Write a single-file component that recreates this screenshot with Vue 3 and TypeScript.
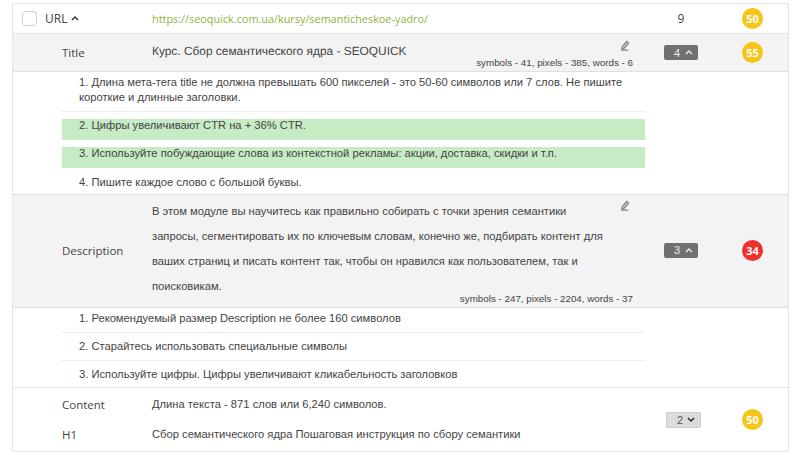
<script setup lang="ts">
interface Advice { text: string; hit?: boolean }

const titleTips: Advice[] = [
  { text: '1. Длина мета-тега title не должна превышать 600 пикселей - это 50-60 символов или 7 слов. Не пишите короткие и длинные заголовки.' },
  { text: '2. Цифры увеличивают CTR на + 36% CTR.', hit: true },
  { text: '3. Используйте побуждающие слова из контекстной рекламы: акции, доставка, скидки и т.п.', hit: true },
  { text: '4. Пишите каждое слово с большой буквы.' },
]
const descTips: Advice[] = [
  { text: '1. Рекомендуемый размер Description не более 160 символов' },
  { text: '2. Старайтесь использовать специальные символы' },
  { text: '3. Используйте цифры. Цифры увеличивают кликабельность заголовков' },
]
</script>

<template>
  <div class="page">
    <div class="table">
      <div class="row head">
        <div class="url-cell">
          <span class="check"></span>
          <span class="url-label">URL</span>
          <svg class="caret" width="8" height="5" viewBox="0 0 8 5"><path d="M1 4l3-3 3 3" fill="none" stroke="#333" stroke-width="1.4" /></svg>
        </div>
        <a class="url">https://seoquick.com.ua/kursy/semanticheskoe-yadro/</a>
        <div class="count">9</div>
        <div class="score-cell"><span class="score yellow">50</span></div>
      </div>

      <div class="row grey title-row">
        <div class="label">Title</div>
        <div class="value">
          <div class="title-text">Курс. Сбор семантического ядра - SEOQUICK</div>
          <svg class="pencil title-pencil" width="10" height="11" viewBox="0 0 10 11"><path d="M2.2 6.8L6.6 1.4l2 1.6L4.2 8.4l-2.2.4zM1 10.2h7" fill="#ccc" stroke="#808080" stroke-width="1.2" /></svg>
          <div class="meta">symbols - 41, pixels - 385, words - 6</div>
        </div>
        <div class="count"><span class="pill">4<svg width="8" height="5" viewBox="0 0 8 5"><path d="M1 4l3-3 3 3" fill="none" stroke="#eee" stroke-width="1.4" /></svg></span></div>
        <div class="score-cell"><span class="score yellow">55</span></div>
      </div>

      <div class="tips title-tips">
        <div v-for="t in titleTips" :key="t.text" class="tip" :class="{ hit: t.hit }">{{ t.text }}</div>
      </div>

      <div class="row grey desc-row">
        <div class="label">Description</div>
        <div class="value">
          <p class="desc-text">В этом модуле вы научитесь как правильно собирать с точки зрения семантики запросы, сегментировать их по ключевым словам, конечно же, подбирать контент для ваших страниц и писать контент так, чтобы он нравился как пользователем, так и поисковикам.</p>
          <svg class="pencil desc-pencil" width="10" height="11" viewBox="0 0 10 11"><path d="M2.2 6.8L6.6 1.4l2 1.6L4.2 8.4l-2.2.4zM1 10.2h7" fill="#ccc" stroke="#808080" stroke-width="1.2" /></svg>
          <div class="meta">symbols - 247, pixels - 2204, words - 37</div>
        </div>
        <div class="count"><span class="pill">3<svg width="8" height="5" viewBox="0 0 8 5"><path d="M1 4l3-3 3 3" fill="none" stroke="#eee" stroke-width="1.4" /></svg></span></div>
        <div class="score-cell"><span class="score red">34</span></div>
      </div>

      <div class="tips desc-tips">
        <div v-for="t in descTips" :key="t.text" class="tip">{{ t.text }}</div>
      </div>

      <div class="row bottom">
        <div class="pairs">
          <div class="label">Content</div>
          <div class="plain">Длина текста - 871 слов или 6,240 символов.</div>
          <div class="label">H1</div>
          <div class="plain">Сбор семантического ядра Пошаговая инструкция по сбору семантики</div>
        </div>
        <div class="count"><span class="pill light">2<svg width="8" height="5" viewBox="0 0 8 5"><path d="M1 1l3 3 3-3" fill="none" stroke="#222" stroke-width="1.4" /></svg></span></div>
        <div class="score-cell"><span class="score yellow">50</span></div>
      </div>
    </div>
  </div>
</template>

<style scoped>
.page { width: 800px; height: 455px; padding: 3px 11px 0 12px; box-sizing: border-box; background: #fff; overflow: hidden; font-family: "Liberation Sans", Arial, sans-serif; font-size: 11.2px; color: #444; }
.table { border: 1px solid #e3e3e3; border-radius: 2px; }
.row { display: grid; grid-template-columns: 139px 493px 72px 71px; align-items: center; box-sizing: border-box; border-bottom: 1px solid #e0e0e0; }
.head { height: 30px; }
.grey { background: #f3f3f3; }
.url-cell { display: flex; align-items: center; padding-left: 9px; }
.check { width: 13px; height: 13px; border: 1px solid #ccc; border-radius: 4px; background: #fff; }
.url-label { margin-left: 8px; font-family: "Open Sans", sans-serif; font-size: 12px; color: #444; }
.caret { margin-left: 4px; }
.url { font-family: "Open Sans", sans-serif; font-size: 10.87px; color: #8db63c; }
.count { display: flex; justify-content: center; font-family: "Open Sans", sans-serif; font-size: 12px; color: #444; }
.score-cell { display: flex; justify-content: center; }
.score { width: 21px; height: 21px; border-radius: 50%; display: flex; align-items: center; justify-content: center; color: #fff; font-family: "Open Sans", sans-serif; font-weight: 700; font-size: 11px; }
.yellow { background: #f5c518; }
.red { background: #f0302a; }
.label { padding-left: 49px; font-family: "Open Sans", sans-serif; font-size: 11.5px; color: #444; }
.value { position: relative; align-self: stretch; }
.title-row { height: 38px; }
.title-text { padding-top: 9px; font-size: 11.9px; text-rendering: geometricPrecision; line-height: 16px; }
.meta { text-align: right; padding-right: 12px; font-size: 9.8px; color: #444; line-height: 12px; }
.title-row .meta { margin-top: -2px; }
.desc-row { height: 113px; padding-bottom: 3px; }
.desc-text { margin: 4px 0 0; padding-right: 38px; line-height: 25px; }
.desc-row .meta { margin-top: -6px; }
.pencil { position: absolute; left: 468px; }
.title-pencil { top: 6px; }
.desc-pencil { top: 5px; }
.pill { width: 34px; height: 15px; box-sizing: border-box; padding: 0 5px 0 10px; display: flex; align-items: center; justify-content: space-between; background: #707070; border-radius: 2px; color: #eee; font-size: 11px; font-family: "Liberation Sans", sans-serif; }
.pill.light { width: 35px; height: 16px; margin-left: 5px; background: #dcdcdc; border: 1px solid #ccc; color: #555; }
.tips { box-sizing: border-box; padding-left: 49px; padding-right: 143px; border-bottom: 1px solid #e0e0e0; }
.title-tips { height: 123px; }
.desc-tips { height: 80px; }
.tip { padding: 6px 0 6px 17px; line-height: 15px; border-bottom: 1px solid #eee; }
.tip:first-child { padding-top: 3px; }
.tip:last-child { padding-bottom: 3px; border-bottom: none; }
.title-tips .tip:last-child { padding-top: 7px; }
.title-tips .tip.hit { height: 21px; margin-top: 7px; padding-top: 0; padding-bottom: 0; border-bottom: none; background: #c6ebc5; line-height: 13px; }
.bottom { height: 63px; border-bottom: none; }
.pairs { grid-column: span 2; align-self: start; padding-top: 1px; display: grid; grid-template-columns: 139px 493px; grid-auto-rows: 30px; align-items: center; }
.plain { font-size: 11.2px; }
</style>
